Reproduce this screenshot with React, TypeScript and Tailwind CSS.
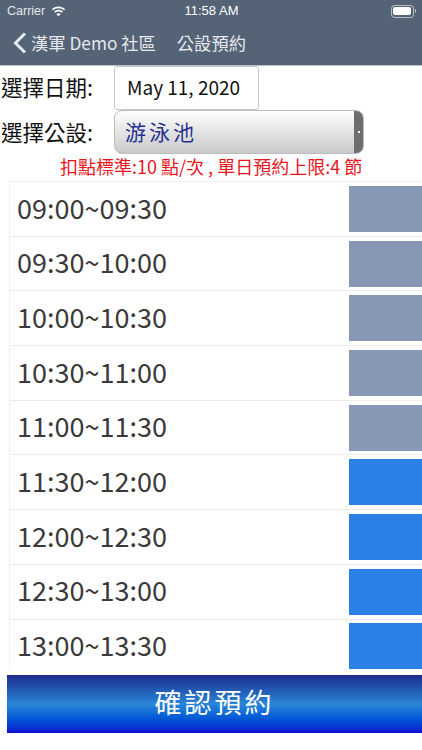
import React from 'react';

const font = 'font-["Noto_Sans_CJK_TC","Noto_Sans",sans-serif]';

const slots = [
  { time: '09:00~09:30', used: true },
  { time: '09:30~10:00', used: true },
  { time: '10:00~10:30', used: true },
  { time: '10:30~11:00', used: true },
  { time: '11:00~11:30', used: true },
  { time: '11:30~12:00', used: false },
  { time: '12:00~12:30', used: false },
  { time: '12:30~13:00', used: false },
  { time: '13:00~13:30', used: false },
];

const WifiIcon = () => (
  <svg width="15" height="11" viewBox="0 0 17 12" fill="white">
    <path d="M8.5 2.2c2.4 0 4.6.9 6.3 2.5l1.2-1.3C14 1.400 11.300.3 8.500.3S3 1.400 1 3.400l1.200 1.300C3.900 3.100 6.100 2.200 8.500 2.200z" />
    <path d="M8.500 6c1.400 0 2.700.5 3.700 1.500l1.300-1.300C12.100 4.900 10.400 4.100 8.500 4.100s-3.600.8-5 2.100l1.300 1.300C5.800 6.500 7.100 6 8.500 6z" />
    <path d="M8.500 11.500l2.400-2.500c-.6-.6-1.500-1-2.400-1s-1.800.4-2.400 1z" />
  </svg>
);

const BatteryIcon = () => (
  <div className="flex items-center justify-end gap-px">
    <div className="h-[13px] w-[23px] rounded-[3.5px] border border-white/60 p-[1.5px]">
      <div className="h-full w-full rounded-[2px] bg-white" />
    </div>
    <div className="h-1 w-px rounded-r-sm bg-white/60" />
  </div>
);

const BackIcon = () => (
  <svg width="14" height="22" viewBox="0 0 14 22" fill="none" stroke="currentColor" strokeWidth="3" className="ml-[13px] mr-[4px] shrink-0">
    <path d="M12 1.500 L2.500 11 L12 20.500" />
  </svg>
);

export default function App() {
  return (
    <div className={`flex h-[750px] w-[422px] flex-col overflow-hidden bg-white ${font}`}>
      {/* Status + nav bar */}
      <div className="h-[66px] shrink-0 border-b border-[#b9c0c9] bg-[#546376] text-white">
        <div className="grid h-[21px] grid-cols-3 items-center pl-[7px] pr-[6px] pt-[1px] font-['Liberation_Sans',sans-serif]">
          <div className="flex items-center gap-[6px] text-[12.5px] text-[#e4e7ea]">
            Carrier <WifiIcon />
          </div>
          <div className="text-center text-[13px] font-medium">11:58 AM</div>
          <BatteryIcon />
        </div>
        <div className="flex h-[44px] items-center text-[#e6e9ed]">
          <BackIcon />
          <span className="text-[17.3px]">漢軍 Demo 社區</span>
          <span className="ml-[21px] text-[17.3px]">公設預約</span>
        </div>
      </div>

      {/* Form */}
      <div className="flex h-[44px] shrink-0 items-center">
        <span className="-mt-[1px] w-[114px] shrink-0 pl-[1px] text-[21.5px] text-[#111]">選擇日期:</span>
        <div className="-mt-[1px] flex h-[44px] w-[145px] items-center rounded-[3px] border border-[#c8c8c8] pl-[12px] text-[19px] text-[#111]">
          May 11, 2020
        </div>
      </div>
      <div className="flex h-[44px] shrink-0 items-center">
        <span className="w-[114px] shrink-0 pl-[1px] text-[21.5px] text-[#111]">選擇公設:</span>
        <div className="flex h-[44px] w-[250px] overflow-hidden rounded-[8px] border border-[#bdbdbd] bg-gradient-to-b from-white to-[#c9c9c9]">
          <span className="flex-1 pl-[10px] text-[21px] leading-[40px] tracking-[3px] text-[#1f2f8f]">游泳池</span>
          <div className="flex w-[9px] items-center justify-center bg-[#6e6e6e]">
            <div className="h-[2px] w-[2px] bg-white" />
          </div>
        </div>
      </div>
      <div className="h-[27px] shrink-0 pl-[60px] text-[18px] leading-[25px] whitespace-nowrap text-[#e8141c]">
        扣點標準:10 點/次 , 單日預約上限:4 節
      </div>

      {/* Time slots */}
      <div className="ml-[9px] h-[488px] shrink-0 overflow-hidden border-t border-l border-[#f0f0f0]">
        {slots.map((slot) => (
          <div key={slot.time} className="flex h-[54.7px] items-center justify-between border-b border-[#ececec]">
            <span className="pb-[2px] pl-[7px] text-[27px] text-[#3a3a3a]">{slot.time}</span>
            <div className={`h-[46px] w-[73px] ${slot.used ? 'bg-[#8797b5]' : 'bg-[#2a80e4]'}`} />
          </div>
        ))}
      </div>

      {/* Confirm */}
      <div className="mt-[6px] ml-[7px] flex h-[58px] shrink-0 items-center justify-center bg-gradient-to-b from-[#1c2a8c] via-[#2a86d8] to-[#1400d0] pb-[4px] text-[27px] tracking-[3px] text-white">
        確認預約
      </div>
    </div>
  );
}
